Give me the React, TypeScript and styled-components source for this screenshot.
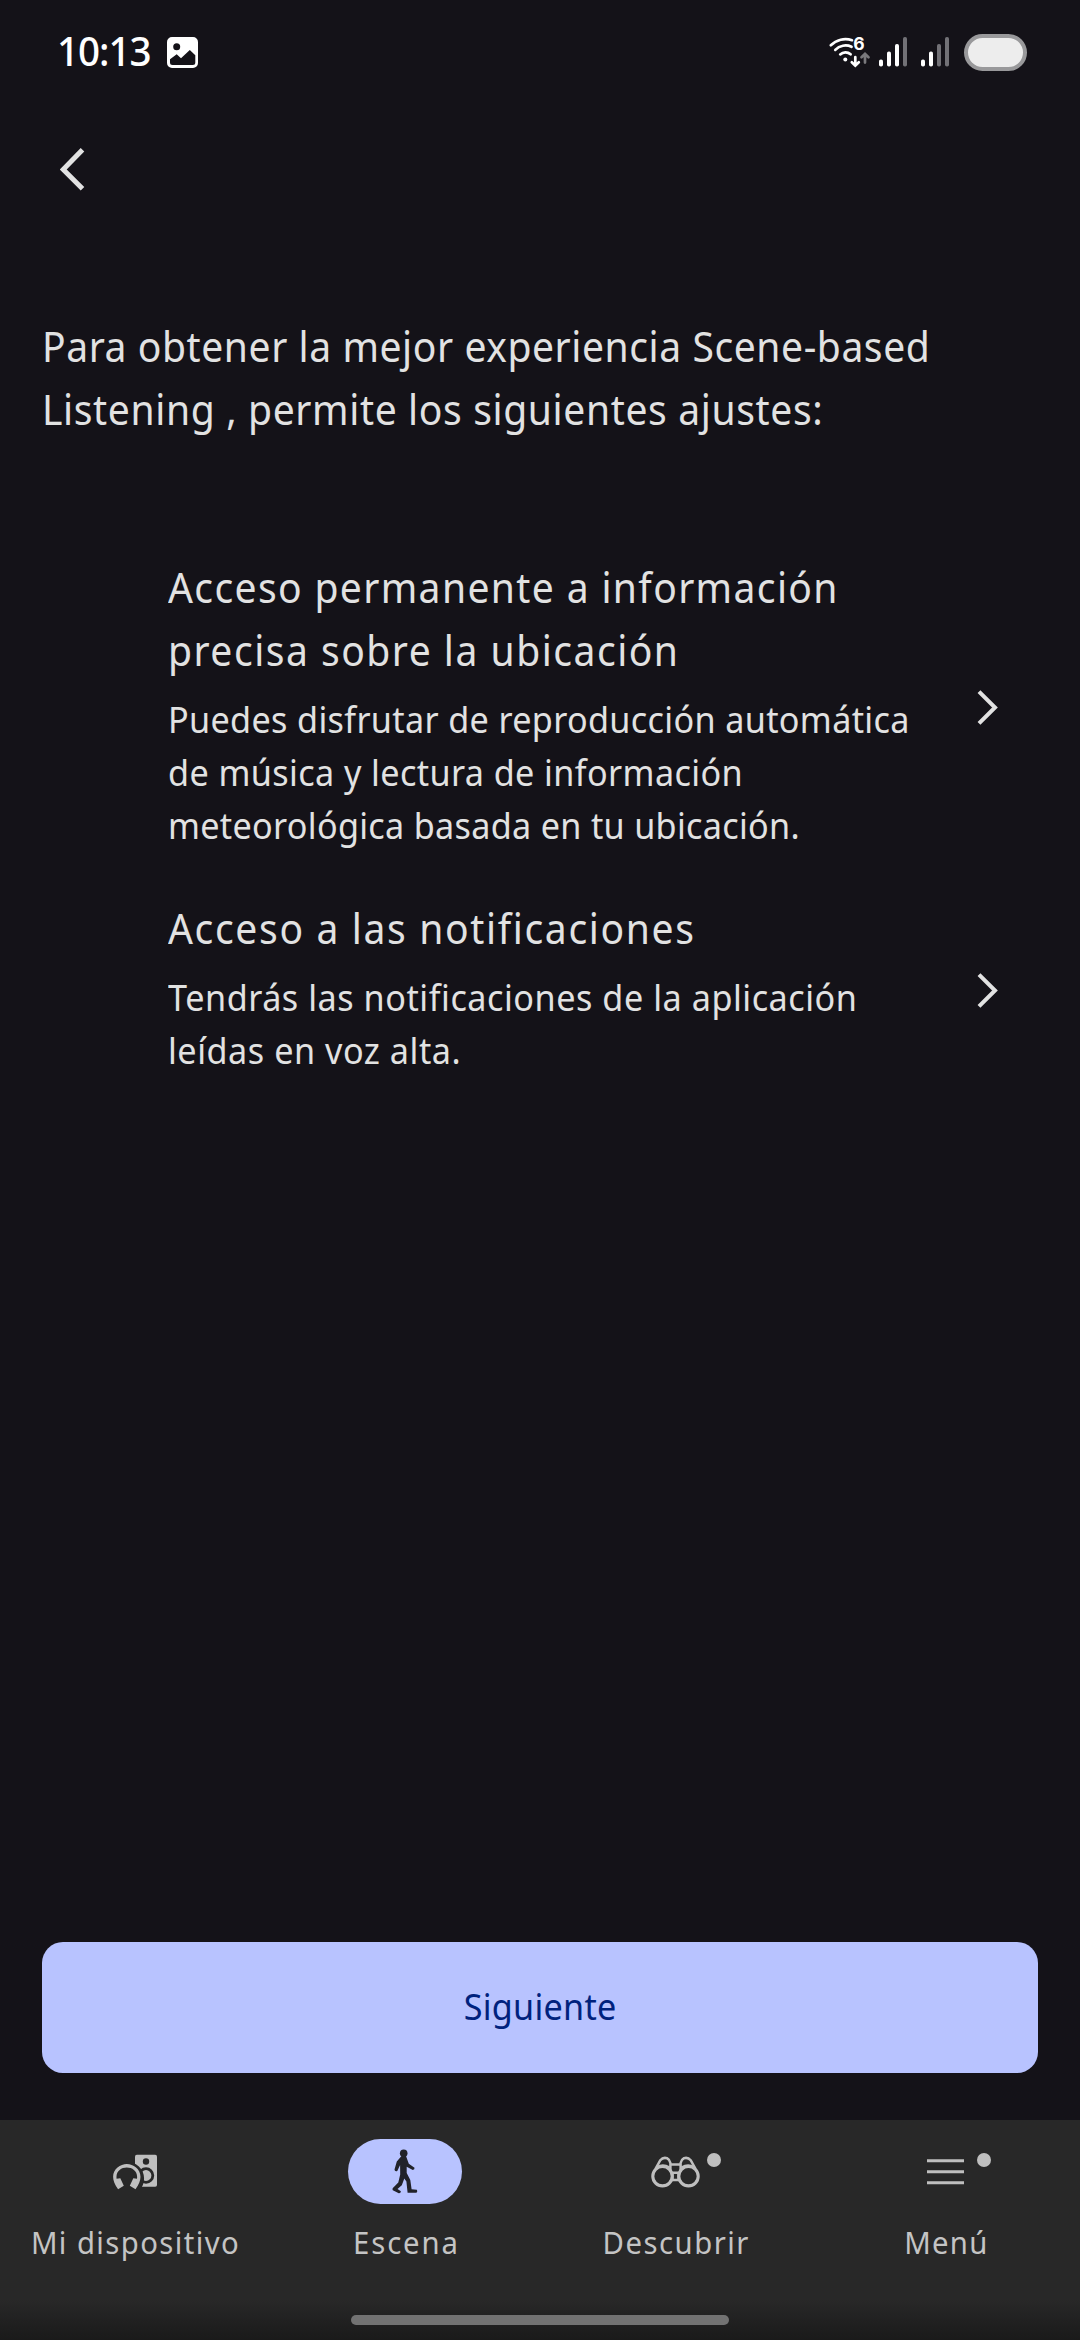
import React from "react";
import styled, { createGlobalStyle } from "styled-components";

const Global = createGlobalStyle`
  * { box-sizing: border-box; }
  body { margin: 0; background: #141218; }
`;

const Screen = styled.div`
  width: 1080px;
  height: 2340px;
  display: flex;
  flex-direction: column;
  background: #141218;
  color: #e2e2e2;
  font-family: "Noto Sans", "Open Sans", sans-serif;
  overflow: hidden;
`;

const StatusBar = styled.header`
  height: 104px;
  display: flex;
  align-items: center;
  padding: 0 53px 0 57px;
  color: #fff;
`;

const Clock = styled.span`
  width: 110px;
  padding-bottom: 2px;
  font-size: 40.6px;
  font-weight: 500;
  line-height: 54px;
  letter-spacing: -1.1px;
  transform: scaleX(0.95);
  transform-origin: left;
`;

const StatusIcons = styled.div`
  display: flex;
  align-items: center;
  margin-left: auto;
`;

const Wifi = styled.svg`
  overflow: visible;
`;

const Signal = styled.svg<{ $gap: number }>`
  margin-left: ${(p) => p.$gap}px;
`;

const Battery = styled.div`
  width: 63px;
  height: 37px;
  margin-left: 15px;
  border: 4px solid #99999b;
  border-radius: 19px;
  background: #ededed;
`;

const TopBar = styled.div`
  height: 132px;
  padding: 44px 0 0 60px;
`;

const Main = styled.main`
  flex: 1;
  padding: 78px 42px 0;
  display: flex;
  flex-direction: column;
`;

const Intro = styled.p`
  margin: 0 0 115px;
  font-size: 42px;
  line-height: 63px;
`;

const Line = styled.span<{ $tracking: number }>`
  display: block;
  width: max-content;
  white-space: pre;
  letter-spacing: ${(p) => p.$tracking}px;
  transform: scaleX(0.93);
  transform-origin: left;
`;

const SettingRow = styled.section`
  display: flex;
  align-items: center;
  padding: 0 40px 0 126px;
  margin-bottom: 44px;
`;

const SettingText = styled.div`
  flex: 1;
  min-width: 0;
`;

const SettingTitle = styled.h2`
  margin: 0 0 12px;
  font-size: 42px;
  font-weight: 400;
  line-height: 63px;
`;

const SettingDescription = styled.p`
  margin: 0;
  font-size: 36.75px;
  line-height: 53px;
`;

const RowArrow = styled.svg`
  flex: none;
  margin-top: 8px;
`;

const NextButton = styled.button`
  height: 131px;
  margin: auto 0 47px;
  padding: 0 0 3px;
  border: 0;
  border-radius: 21px;
  background: #b8c3ff;
  color: #00227d;
  font-family: inherit;
  font-size: 36.75px;
`;

const ButtonLabel = styled.span`
  display: inline-block;
  letter-spacing: 0.27px;
  transform: scaleX(0.93);
`;

const NavBar = styled.nav`
  height: 220px;
  display: grid;
  grid-template-columns: repeat(4, 270px);
  grid-template-rows: 190px 30px;
  background: linear-gradient(#282828 0 180px, #1a1a1a 220px);
`;

const NavItem = styled.div`
  display: flex;
  flex-direction: column;
  align-items: center;
  padding-top: 19px;
  color: #c4c4c4;
`;

const Pill = styled.div<{ $active?: boolean }>`
  position: relative;
  display: flex;
  align-items: center;
  justify-content: center;
  width: 114px;
  height: 65px;
  border-radius: 33px;
  background: ${(p) => (p.$active ? "#b8c3ff" : "transparent")};
`;

const Dot = styled.i`
  position: absolute;
  top: 14px;
  right: 11px;
  width: 14px;
  height: 14px;
  border-radius: 50%;
  background: #bfbfbf;
`;

const NavLabel = styled.span<{ $tracking: number }>`
  margin: 16px 0 0 2px;
  font-size: 31.5px;
  line-height: 44px;
  letter-spacing: ${(p) => p.$tracking}px;
  white-space: nowrap;
  transform: scaleX(0.93);
`;

const HomeHandle = styled.div`
  grid-column: 1 / -1;
  justify-self: center;
  width: 378px;
  height: 10px;
  margin-top: 5px;
  border-radius: 5px;
  background: #727272;
`;

const PictureIcon = () => (
  <svg width="31" height="31" viewBox="0 0 31 31">
    <path
      fillRule="evenodd"
      fill="#fff"
      d="M5 0h21a5 5 0 0 1 5 5v21a5 5 0 0 1-5 5H5a5 5 0 0 1-5-5V5a5 5 0 0 1 5-5Z M9.700 6.200a3.500 3.500 0 1 0 0 7a3.500 3.500 0 1 0 0-7Z M3 22.300 9.700 17.300 14 21.200 22.800 13 28.300 18.300V25.500a2.500 2.500 0 0 1-2.500 2.500H5.500a2.500 2.500 0 0 1-2.500-2.500Z"
    />
  </svg>
);

const WifiIcon = () => (
  <Wifi width="42" height="32" viewBox="829 36 42 32" fill="none" stroke="#fff" strokeWidth="2.700" strokeLinecap="round">
    <path d="M830.800 45.300A20.500 20.500 0 0 1 852 40.200" />
    <path d="M835.300 49.900A14 14 0 0 1 851.500 46.800" />
    <path d="M840.200 54.400A7.600 7.600 0 0 1 850.600 54.300" />
    <circle cx="845.300" cy="59.500" r="2" fill="#fff" stroke="none" />
    <path d="M855.300 57.200V65.400M851.800 62.200 855.300 65.600 858.800 62.200" />
    <path stroke="#79787c" d="M865 62.600V54M861.500 57.200 865 53.800 868.500 57.200" />
    <text x="853.200" y="50.400" fill="#fff" stroke="none" fontFamily="Inter, sans-serif" fontWeight="700" fontSize="17.500">
      6
    </text>
  </Wifi>
);

const SignalIcon = ({ level, gap }: { level: number; gap: number }) => (
  <Signal width="28" height="30" viewBox="0 0 28 30" $gap={gap}>
    {[22.5, 14.5, 7, 0].map((y, i) => (
      <rect key={y} x={i * 8} y={y} width="4" height={29.5 - y} rx="1.800" fill={i < level ? "#fff" : "#727176"} />
    ))}
  </Signal>
);

const BackIcon = () => (
  <svg width="25" height="43" viewBox="0 0 25 43" fill="none" stroke="#e2e2e2" strokeWidth="5">
    <path d="M22.500 1.800 3.200 21.500 22.500 40.800" />
  </svg>
);

const ArrowIcon = () => (
  <RowArrow width="21" height="35" viewBox="0 0 21 35" fill="none" stroke="#e2e2e2" strokeWidth="4">
    <path d="M2 1.600 18 17.500 2 33.400" />
  </RowArrow>
);

const DevicesIcon = () => (
  <svg width="46" height="36" viewBox="0 0 46 36">
    <rect x="23" y="0.700" width="22" height="32" rx="1.800" fill="#bfbfbf" />
    <circle cx="34" cy="7.500" r="3.200" fill="#282828" />
    <circle cx="34" cy="21.500" r="6.800" fill="#bfbfbf" stroke="#282828" strokeWidth="2.800" />
    <path d="M4 34.500A15 15 0 1 1 26.500 34.500Z" fill="#282828" stroke="#282828" strokeWidth="3.600" />
    <path
      d="M6.100 35.200C-5.500 20 5.500 9.900 14.800 9.900S35.100 20 23.500 35.200L17.800 31.800 21.300 24.200 25 24.700C26 17.500 20.500 13.600 14.800 13.600S3.600 17.500 4.600 24.700L8.300 24.200 11.800 31.800Z"
      fill="#bfbfbf"
    />
  </svg>
);

const WalkIcon = () => (
  <svg width="26" height="45" viewBox="0 0 26 45" fill="#212229">
    <circle cx="11.700" cy="4.200" r="3.800" />
    <path d="M9.500 7H14L16.800 14.700 22.500 18.800Q22.800 20.800 20.800 20.900L14.700 17.700V24L18.300 31 19.600 40.200 24.800 40.800Q26 42.500 24.500 43.800H15.600L14.400 32.500 12.300 29.500 9.800 36.200 5.500 40 8.900 42.300Q8.800 44.500 6.800 44.300L0.800 41.300Q0 40 0.900 39L6.300 33.500 8.200 25.500 8.100 16 5.300 22Q2.600 22.800 2.500 20.500L4.800 12.500Z" />
  </svg>
);

const BinocularsIcon = () => (
  <svg width="49" height="32" viewBox="0 0 49 32" fill="none" stroke="#bfbfbf" strokeWidth="2.500">
    <circle cx="11.500" cy="20.200" r="9.700" strokeWidth="3.100" />
    <circle cx="37.500" cy="20.200" r="9.700" strokeWidth="3.100" />
    <path d="M4.500 12.800 9.300 4.200Q12 1 16 2.200Q18.500 3.500 19.400 7V15.500M44.500 12.800 39.700 4.200Q37 1 33 2.200Q30.500 3.500 29.600 7V15.500" />
    <path d="M6.500 11Q12 7.800 18.500 11.500M42.500 11Q37 7.800 30.500 11.500" />
    <path d="M19 8.500H30M20.500 16.800H28.500M21 24H28" />
    <path d="M21.800 16V25M27.200 16V25" strokeWidth="1.800" />
  </svg>
);

const MenuIcon = () => (
  <svg width="37" height="26" viewBox="0 0 37 26" fill="#bfbfbf">
    <path d="M0 0.300H37V3.300H0ZM0 11.300H37V14.300H0ZM0 22.300H37V25.300H0Z" />
  </svg>
);

export default function App() {
  return (
    <>
      <Global />
      <Screen>
        <StatusBar>
          <Clock>10:13</Clock>
          <PictureIcon />
          <StatusIcons>
            <WifiIcon />
            <SignalIcon level={3} gap={8} />
            <SignalIcon level={2} gap={14} />
            <Battery />
          </StatusIcons>
        </StatusBar>
        <TopBar>
          <BackIcon />
        </TopBar>
        <Main>
          <Intro>
            <Line $tracking={0.61}>Para obtener la mejor experiencia Scene-based</Line>
            <Line $tracking={0.67}>Listening , permite los siguientes ajustes:</Line>
          </Intro>
          <SettingRow>
            <SettingText>
              <SettingTitle>
                <Line $tracking={1.46}>Acceso permanente a información</Line>
                <Line $tracking={1.61}>precisa sobre la ubicación</Line>
              </SettingTitle>
              <SettingDescription>
                <Line $tracking={0.37}>Puedes disfrutar de reproducción automática</Line>
                <Line $tracking={0.43}>de música y lectura de información</Line>
                <Line $tracking={0.33}>meteorológica basada en tu ubicación.</Line>
              </SettingDescription>
            </SettingText>
            <ArrowIcon />
          </SettingRow>
          <SettingRow>
            <SettingText>
              <SettingTitle>
                <Line $tracking={1.76}>Acceso a las notificaciones</Line>
              </SettingTitle>
              <SettingDescription>
                <Line $tracking={0.58}>Tendrás las notificaciones de la aplicación</Line>
                <Line $tracking={0.58}>leídas en voz alta.</Line>
              </SettingDescription>
            </SettingText>
            <ArrowIcon />
          </SettingRow>
          <NextButton>
            <ButtonLabel>Siguiente</ButtonLabel>
          </NextButton>
        </Main>
        <NavBar>
          <NavItem>
            <Pill>
              <DevicesIcon />
            </Pill>
            <NavLabel $tracking={1.53}>Mi dispositivo</NavLabel>
          </NavItem>
          <NavItem>
            <Pill $active>
              <WalkIcon />
            </Pill>
            <NavLabel $tracking={2.04}>Escena</NavLabel>
          </NavItem>
          <NavItem>
            <Pill>
              <BinocularsIcon />
              <Dot />
            </Pill>
            <NavLabel $tracking={1.61}>Descubrir</NavLabel>
          </NavItem>
          <NavItem>
            <Pill>
              <MenuIcon />
              <Dot />
            </Pill>
            <NavLabel $tracking={1.36}>Menú</NavLabel>
          </NavItem>
          <HomeHandle />
        </NavBar>
      </Screen>
    </>
  );
}
